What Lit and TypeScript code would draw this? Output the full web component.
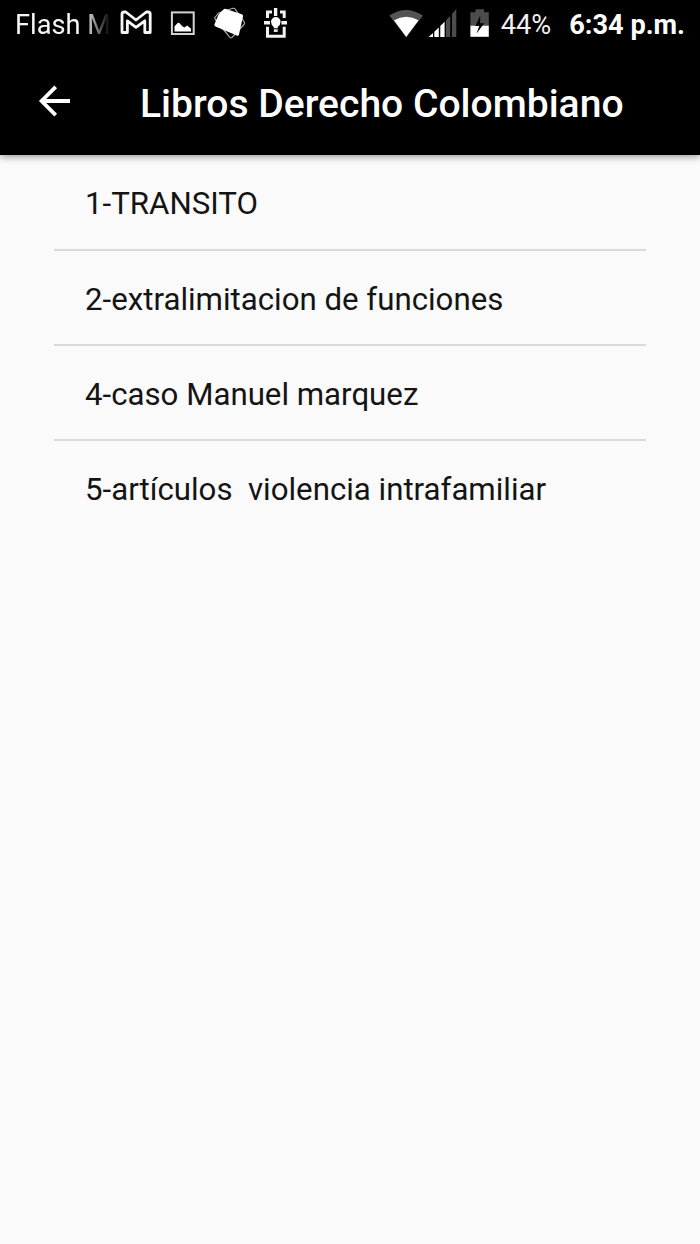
import { LitElement, html, css } from "lit";
import { customElement } from "lit/decorators.js";

@customElement("status-bar")
class StatusBar extends LitElement {
  static styles = css`
    :host {
      display: flex;
      justify-content: space-between;
      height: 49px;
      color: #fff;
      font-size: 27.2px;
      line-height: 51px;
      white-space: pre;
    }
    .side { display: flex; align-items: flex-start; }
    .left { padding-left: 15px; }
    .right { padding-right: 15px; }
    svg { display: block; height: 49px; flex: none; }
    .ticker {
      width: 96px;
      color: #f6f6f6;
      -webkit-mask-image: linear-gradient(90deg, #000 72%, transparent 99%);
      mask-image: linear-gradient(90deg, #000 72%, transparent 99%);
    }
    .mail { margin-left: 7px; }
    .battery { color: #f0f0f0; margin-right: 18px; }
    .clock { font-weight: 700; }
  `;
  render() {
    return html`
      <div class="side left"><span class="ticker">Flash M</span><svg class="mail" width="48" viewBox="118 0 48 49">
          <path d="M122 14.2V32.5H127.4V20.8L136 27.4L144.8 20.8V32.5H150.2V14.2Q150.2 12 148 12H146.3L136 20L125.8 12H124.2Q122 12 122 14.2Z" fill="none" stroke="#f6f6f6" stroke-width="2.8" stroke-linejoin="round"/>
        </svg><svg width="44" viewBox="166 0 44 49">
          <rect x="171.9" y="12.4" width="21.8" height="21.6" fill="none" stroke="#d4d4d4" stroke-width="2"/>
          <path d="M174.5 31.5V26.5Q176.3 24 177.7 23Q179 22.2 180.3 24L182.3 26.3L184.3 27.5L187.2 25.4L191 28.8V31.5Z" fill="#fff"/>
        </svg><svg width="50" viewBox="210 0 50 49">
          <path d="M218.5 13L233 8.3Q234.5 8 235.3 9.3L244.3 22Q245 23.2 244 24.5L232.5 37Q231 38.5 229.7 37.2L225.5 32L215 19Q214.4 17.9 215.3 17Z" fill="none" stroke="#aaa" stroke-width="1.2" stroke-linejoin="round"/>
          <path d="M223.5 9.4Q224.5 8.5 226 9L241.8 14.3Q243.3 14.9 243 16.5L239 34.5Q238.5 36.2 236.8 35.5L215.5 26.5Q214 25.8 214.5 24.2L218.5 14.5Z" fill="#fff"/>
        </svg><svg width="40" viewBox="260 0 40 49">
          <path d="M272 11.9H267.5V18M280 11.9H284.2V18M267.5 26.8V36.3H284.2V26.8" fill="none" stroke="#f2f2f2" stroke-width="3"/>
          <path d="M275.6 8V16M264 22.7H270M281.4 22.7H287" stroke="#f2f2f2" stroke-width="3.4" fill="none"/>
          <path d="M271 21.8A4.8 4.8 0 0 1 280.6 21.8Q280.6 24.7 277.7 27V28.3H273.8V27Q271 24.7 271 21.8Z" fill="#fff"/>
          <path d="M273.8 29.2H277.7V32H273.8Z" fill="#ddd"/>
        </svg></div>
      <div class="side right"><svg width="40" viewBox="387 0 40 49">
          <path d="M389.3 15.6Q406.2 4.4 423 15.6L406.2 37Z" fill="#545454"/>
          <path d="M394 20.3Q406.2 13 418.6 20.3L406.2 37Z" fill="#fff"/>
        </svg><svg width="40" viewBox="427 0 40 49">
          <path d="M428.6 37L433 33V37ZM434.3 31.8L438.8 27.5V37H434.3ZM440.3 26L444.6 21.7V37H440.3Z" fill="#fff"/>
          <path d="M446 20.2L450.2 15.9V37H446ZM452 14.1L456.3 9V37H452Z" fill="#4c4c4c"/>
        </svg><svg width="34" viewBox="467 0 34 49">
          <path d="M470.4 12.3H475.4V9.2H484V12.3H488.8V25.6H470.4Z" fill="#4c4c4c"/>
          <path d="M470.4 25.6H488.8V36.8H470.4Z" fill="#fff"/>
          <path d="M480.3 15.5L475.4 26H479.3L476.4 33.8L484.2 23.2H480Z" fill="#000"/>
        </svg><span class="battery">44%</span><span class="clock">6:34 p.m.</span></div>
    `;
  }
}

@customElement("app-root")
class AppRoot extends LitElement {
  static styles = css`
    :host {
      display: block;
      min-height: 1244px;
      background: #fafafa;
      color: #141414;
      font-family: Roboto, "Liberation Sans", sans-serif;
    }
    .header {
      background: #000;
      height: 155px;
      box-shadow: 0 2px 7px rgba(0, 0, 0, 0.38);
    }
    .toolbar {
      display: flex;
      align-items: flex-start;
      height: 106px;
      padding-left: 36px;
    }
    .back { display: block; margin-top: 34px; }
    .title {
      margin: 0 0 0 68px;
      color: #fff;
      font-size: 39.05px;
      font-weight: 500;
      line-height: 111px;
      white-space: nowrap;
    }
    .list { margin: 0; padding: 0 54px 0 53.5px; list-style: none; }
    .item {
      box-sizing: border-box;
      height: 95.33px;
      padding: 1px 31.5px 0;
      font-size: 31.23px;
      line-height: 95.2px;
      white-space: pre;
      border-bottom: 2px solid #dadada;
    }
    .item:first-child { height: 95.7px; }
    .item:last-child { border-bottom: 0; }
  `;
  items = [
    "1-TRANSITO",
    "2-extralimitacion de funciones",
    "4-caso Manuel marquez",
    "5-artículos  violencia intrafamiliar",
  ];
  render() {
    return html`
      <header class="header">
        <status-bar></status-bar>
        <div class="toolbar">
          <svg class="back" width="36" height="36" viewBox="36 83 36 36">
            <path d="M70 101H42M55.7 86.9L41.6 101L55.7 115.1" fill="none" stroke="#fff" stroke-width="3.8"/>
          </svg>
          <h1 class="title">Libros Derecho Colombiano</h1>
        </div>
      </header>
      <ul class="list">
        ${this.items.map((t) => html`<li class="item">${t}</li>`)}
      </ul>
    `;
  }
}
